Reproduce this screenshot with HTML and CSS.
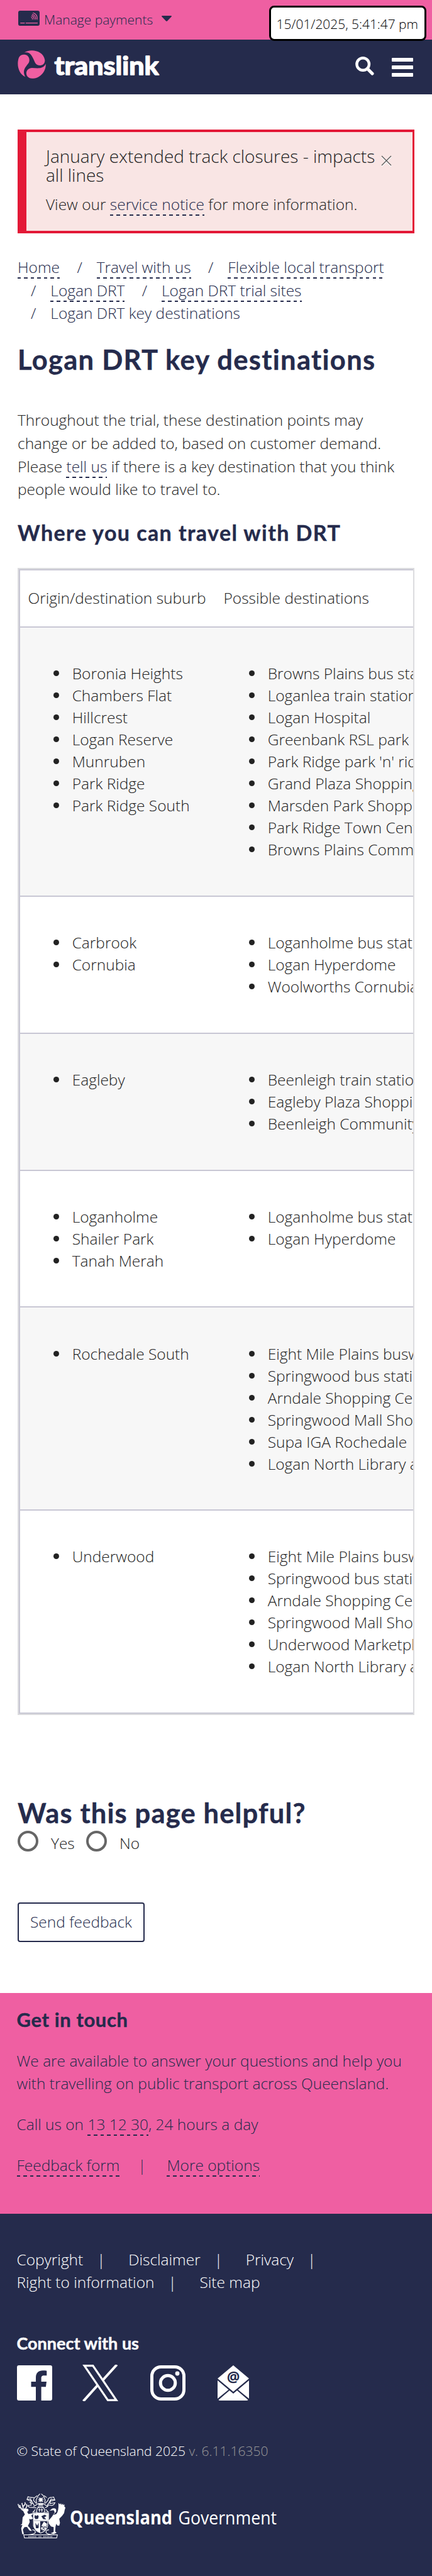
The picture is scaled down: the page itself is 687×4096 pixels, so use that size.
FILE: index.html
```html
<!DOCTYPE html>
<html lang="en">
<head>
<meta charset="utf-8">
<title>Logan DRT key destinations | Translink</title>
<link rel="stylesheet" href="styles.css">
</head>
<body>
<div class="payments">
  <svg class="card" viewBox="0 0 173 122"><rect width="173" height="122" rx="15" fill="#252b4c"/><g fill="none" stroke="#ef5fa2" stroke-width="6" stroke-linecap="round"><path d="M19 99.500h32M63 99.500h92"/><path d="M106 51q9 4 9 18M110 40q19 7 18 29M114 29q29 10 27 40M121 18q36 12 32 51"/></g></svg>
  <span class="payments-label">Manage payments</span>
  <svg class="caret" viewBox="0 0 82 46"><path d="M6 0H76Q85 1 80 8L47 42Q41 48 35 42L2 8Q-3 1 6 0Z" fill="#252b4c"/></svg>
  <div class="stamp"><span>15/01/2025, 5:41:47 pm</span></div>
</div>
<header class="masthead">
  <svg class="logo" viewBox="144 411 231 232" fill="#ef5fa2"><path d="M197 430C244 395 355 408 367 491C368 520 350 535 323 535C298 534 287 517 279 495C262 456 244 419 197 430Z"/><path d="M206 629C148 600 134 526 154 470C163 453 179 446 197 446C224 447 240 467 240 491C240 513 228 523 216 538C190 570 190 598 206 629Z"/><path d="M374 522C378 585 327 642 262 642C230 641 215 621 215 597C216 573 235 556 261 555C299 556 352 570 374 522Z"/></svg>
  <svg class="wordmark" viewBox="0 0 170 48"><text x="1.500" y="38.500" textLength="166" lengthAdjust="spacingAndGlyphs">translink</text></svg>
  <div class="tools">
    <svg class="search" viewBox="0 0 30 30" fill="none" stroke="#fff"><circle cx="12.200" cy="12" r="9.800" stroke-width="4.400"/><path d="M20 20l7 7" stroke-width="5.200" stroke-linecap="round"/></svg>
    <div class="burger"><i></i><i></i><i></i></div>
  </div>
</header>
<main class="content">
  <section class="alert">
    <div class="alert-head"><h4>January extended track closures - impacts all lines</h4><svg class="close" viewBox="0 0 17 18" fill="none"><path d="M1 2.500L16 17.500M16 2.500L1 17.500" stroke="#fff" stroke-width="1.500"/><path d="M1 1L16 16M16 1L1 16" stroke="#555" stroke-width="1.300"/></svg></div>
    <p>View our <a>service notice</a> for more information.</p>
  </section>
  <ul class="crumbs">
    <li><a>Home</a></li>
    <li><a>Travel with us</a></li>
    <li><a>Flexible local transport</a></li><br>
    <li><a>Logan DRT</a></li>
    <li><a>Logan DRT trial sites</a></li><br>
    <li>Logan DRT key destinations</li>
  </ul>
  <h1>Logan DRT key destinations</h1>
  <p class="intro">Throughout the trial, these destination points may<br>change or be added to, based on customer demand.<br>Please <a>tell us</a> if there is a key destination that you think<br>people would like to travel to.</p>
  <h2>Where you can travel with DRT</h2>
  <div class="table">
    <div class="grid">
      <div class="row head"><div>Origin/destination suburb</div><div>Possible destinations</div></div>
      <div class="row shade">
        <ul><li>Boronia Heights</li><li>Chambers Flat</li><li>Hillcrest</li><li>Logan Reserve</li><li>Munruben</li><li>Park Ridge</li><li>Park Ridge South</li></ul>
        <ul><li>Browns Plains bus station</li><li>Loganlea train station</li><li>Logan Hospital</li><li>Greenbank RSL park 'n' ride</li><li>Park Ridge park 'n' ride</li><li>Grand Plaza Shopping Centre</li><li>Marsden Park Shopping Centre</li><li>Park Ridge Town Centre</li><li>Browns Plains Community Centre</li></ul>
      </div>
      <div class="row">
        <ul><li>Carbrook</li><li>Cornubia</li></ul>
        <ul><li>Loganholme bus station</li><li>Logan Hyperdome</li><li>Woolworths Cornubia</li></ul>
      </div>
      <div class="row shade">
        <ul><li>Eagleby</li></ul>
        <ul><li>Beenleigh train station</li><li>Eagleby Plaza Shopping Centre</li><li>Beenleigh Community Centre</li></ul>
      </div>
      <div class="row">
        <ul><li>Loganholme</li><li>Shailer Park</li><li>Tanah Merah</li></ul>
        <ul><li>Loganholme bus station</li><li>Logan Hyperdome</li></ul>
      </div>
      <div class="row shade">
        <ul><li>Rochedale South</li></ul>
        <ul><li>Eight Mile Plains busway station</li><li>Springwood bus station</li><li>Arndale Shopping Centre</li><li>Springwood Mall Shopping Centre</li><li>Supa IGA Rochedale</li><li>Logan North Library and pool</li></ul>
      </div>
      <div class="row">
        <ul><li>Underwood</li></ul>
        <ul><li>Eight Mile Plains busway station</li><li>Springwood bus station</li><li>Arndale Shopping Centre</li><li>Springwood Mall Shopping Centre</li><li>Underwood Marketplace</li><li>Logan North Library and pool</li></ul>
      </div>
    </div>
  </div>
  <h3 class="helpful">Was this page helpful?</h3>
  <div class="radios"><label><i></i><span>Yes</span></label><label><i></i><span>No</span></label></div>
  <button class="send">Send feedback</button>
</main>
<section class="touch">
  <h3>Get in touch</h3>
  <p>We are available to answer your questions and help you<br>with travelling on public transport across Queensland.</p>
  <p>Call us on <a>13 12 30</a>, 24 hours a day</p>
  <p class="links"><a>Feedback form</a><span class="bar">|</span><a>More options</a></p>
</section>
<footer class="footer">
  <div class="legal"><span>Copyright</span><i>|</i><span>Disclaimer</span><i>|</i><span>Privacy</span><i>|</i></div>
  <div class="legal"><span>Right to information</span><i>|</i><span>Site map</span></div>
  <h4>Connect with us</h4>
  <div class="social">
    <svg class="fb" viewBox="0 0 56 56"><path fill="#fff" d="M3 0H53Q56 0 56 3V53Q56 56 53 56H38.600V34.300H45.900L47 26H38.600V20.500C38.600 18 39.500 16.300 43 16.300H47.300V8.700C46 8.500 43.500 8.300 41 8.300C34.500 8.300 30 12 30 19.400V26H22.500V34.300H30V56H3Q0 56 0 53V3Q0 0 3 0Z"/></svg>
    <svg class="xx" viewBox="0 0 57 58" fill="none" stroke="#fff" stroke-width="3.200"><path d="M3.200 1.600H16.800L54 56.400H40.500Z"/><path d="M54.800 0L32.500 24.500M24 33L1.500 58" stroke-width="4"/></svg>
    <svg class="ig" viewBox="0 0 56 56"><rect x="2.500" y="2.500" width="51" height="51" rx="14.500" fill="none" stroke="#fff" stroke-width="5"/><circle cx="28" cy="28" r="11.800" fill="none" stroke="#fff" stroke-width="5"/><circle cx="43" cy="13" r="3.400" fill="#fff"/></svg>
    <svg class="em" viewBox="0 0 50 56"><g fill="#fff"><path d="M25 0L50 21L25 42L0 21Z"/><path d="M0 24L17.500 38.700L0 53Z"/><path d="M50 24L32.500 38.700L50 53Z"/><path d="M19 40L25 45L31 40L48.500 55Q48 56 46 56H4Q2 56 1.500 55Z"/></g><text x="25" y="27" text-anchor="middle" class="at">@</text></svg>
  </div>
  <p class="copy">© State of Queensland 2025 <span>v. 6.11.16350</span></p>
  <div class="gov">
    <svg class="crest" viewBox="95 155 256 366" preserveAspectRatio="none" fill="none" stroke="#fff">
      <g class="line" stroke-width="1.100">
        <path d="M215 157L205 172L194 208L198 236M222 157L233 172L243 208L239 236M186 188L200 172M251 188L237 172M206 262L197 290L198 314H236L241 290L230 262ZM180 262L206 236H231L258 262M206 250H231M203 270H234M212 278V305M206 288H218M225 278V305M219 288H231"/>
        <path d="M150 180Q149 192 145 203Q161 218 169 210Q175 230 184 251M150 180Q161 188 170 186L184 188L180 210L195 236M145 203L165 198L168 250Q155 250 149 253Q157 272 169 268L196 272M158 226L176 238"/>
        <path d="M288 182Q290 195 295 208Q279 218 270 210Q264 230 254 251M288 182Q277 188 269 186L260 195L258 210L243 236M295 208L274 200L268 236L295 230Q288 254 275 252L259 248Q254 270 241 270M190 285L177 308H200M246 285L260 308H238"/>
        <path d="M208 188L231 222M231 188L208 222M205 205H234M219 188V226M213 195h12v20h-12Z"/>
        <path d="M175 318H261V378H180V420Q188 462 218 478Q250 462 256 418V378"/>
        <path d="M174 452Q190 450 190 475Q184 488 150 493M263 452Q247 450 247 475Q253 488 286 493"/>
        <path d="M128 493H308L304 519H132Z"/>
      </g>
      <g fill="#fff" stroke="none">
        <path d="M109 281L122 283L132 276L151 280Q156 290 151 299L146 305L153 322L173 316L177 324L168 335L178 360L166 366L157 362L160 388L150 420L158 432L170 456L168 462L158 456L145 428L132 430L123 450L129 487H120L114 440L121 412L110 414L119 402L122 350L134 326L125 298Z"/>
        <path d="M314 231L322 244L327 234L331 248L338 238L340 250L347 242L345 260L351 270L347 290L344 315L333 338L318 361L322 395L318 418L308 416L302 402L298 425L296 466L304 476L288 488L272 480L288 470L288 430L274 424L262 400L260 378L280 342L294 308L288 290L266 296L280 278Q294 270 301 283L302 302L286 330L302 322Q316 300 314 231Z"/>
        <path fill-rule="evenodd" d="M178 320H259V376H178ZM188 330L196 338L203 330L208 342L204 362L190 364L185 348ZM222 340L240 328L251 338L238 350L249 366L232 364Z"/>
        <path fill-rule="evenodd" d="M182 382H216V474Q188 458 182 420ZM190 394L200 418L208 392L207 438H193Z"/>
        <path d="M222 420L236 384L252 402L250 430Q244 420 234 422ZM234 424A14 16 0 1 1 233.900 424Z"/>
        <path d="M206 236H232V246H206Z"/>
      </g>
      <path class="line" stroke="#252b4c" stroke-width="1.200" d="M228 430L241 448M241 430L228 448M194 424H208"/>
      <path class="line" stroke-width="1.500" d="M122 280L104 268L97 240M112 272L106 248M126 278L121 250L118 232M124 262L136 240L134 226M138 277L144 262L143 240"/>
      <path class="line" stroke-width="2.200" stroke-dasharray="1.500 1" d="M153 507H197M208 507H221M233 507H284" opacity=".7"/>
    </svg>
    <svg class="govname" viewBox="0 0 332 34"><text x="0" y="25" textLength="163" lengthAdjust="spacingAndGlyphs" font-weight="700">Queensland</text><text x="172.500" y="25" textLength="156.500" lengthAdjust="spacingAndGlyphs">Government</text></svg>
  </div>
</footer>
</body>
</html>
```
FILE: styles.css
```css
* { box-sizing: border-box; }
body { margin: 0; width: 687px; height: 4096px; overflow: hidden; background: #fff; color: #222; font: 300 24.47px/36.7px "Open Sans", "Noto Sans", sans-serif; }
h1, h2, h3, h4, p, ul { margin: 0; padding: 0; }
svg { display: block; flex: none; }
i { font-style: normal; }
a { color: #252b4c; padding-bottom: 2px; background: repeating-linear-gradient(90deg, #252b4c 0 5.2px, transparent 5.2px 10.49px) left bottom / 100% 2px no-repeat; }
h1, h2, h3, .footer h4 { font-family: Lato, sans-serif; font-weight: 700; color: #252b4c; white-space: nowrap; -webkit-text-stroke: .4px; font-variant-ligatures: none; }

.payments { position: relative; height: 63px; background: #ef5fa2; display: flex; align-items: flex-start; padding-left: 29px; }
.card { width: 34px; height: 24px; margin-top: 17px; }
.payments-label { margin: 12.5px 0 0 7px; width: 187px; color: #252b4c; font-size: 21px; white-space: nowrap; }
.caret { width: 16px; height: 9px; margin-top: 24.500px; }
.stamp { position: absolute; left: 428px; top: 9px; width: 250px; height: 56px; border: 3.5px solid #000; border-radius: 8px; background: #fff; color: #000; font-size: 20.9px; line-height: 52px; padding-left: 8.5px; white-space: nowrap; }

.masthead { height: 87px; background: #252b4c; display: flex; align-items: flex-start; padding: 17px 30px 0 28px; }
.logo { width: 45px; height: 45px; }
.wordmark { width: 170px; height: 48px; margin-left: 12px; }
.wordmark text { font: 700 40px Lato, sans-serif; fill: #fff; stroke: #fff; stroke-width: 1.6px; stroke-linejoin: round; }
.tools { margin-left: auto; display: flex; gap: 28px; padding-top: 10px; }
.search { width: 30px; height: 30px; }
.burger { width: 34px; padding-top: 2px; display: flex; flex-direction: column; gap: 6px; }
.burger i { height: 6px; background: #fff; border-radius: 1px; }

.content { padding: 56px 28px 0; height: 3019px; }
.alert { height: 165px; border: 4px solid #e31937; border-width: 4px 3px 4px 14px; background: #f9e5e4; padding: 24px 33px 0 31px; }
.alert-head { display: flex; }
.alert-head h4 { font-weight: 300; font-size: 28px; line-height: 29.6px; width: 533px; }
.close { width: 17px; height: 18px; margin-top: 13px; }
.alert p { margin-top: 13.8px; }
.crumbs { list-style: none; margin-top: 36px; color: #252b4c; white-space: nowrap; }
.crumbs li { display: inline; }
.crumbs li + li::before, .crumbs br + li::before { content: "/"; padding: 0 23px 0 21px; }
h1 { margin-top: 29px; font-size: 43.500px; line-height: 50px; letter-spacing: 1.3px; }
.intro { margin-top: 54px; white-space: nowrap; }
h2 { margin-top: 30px; font-size: 34px; line-height: 40px; letter-spacing: 1.42px; }

.table { margin-top: 36px; border: 2px solid #dcdcdf; overflow: hidden; }
.grid { width: 900px; border: solid #c8c7d4; border-width: 2px 0 0 2px; }
.row { display: grid; grid-template-columns: 311px 1fr; border-bottom: 2px solid #c8c7d4; line-height: 35px; white-space: nowrap; }
.row > ul { list-style: none; padding: 55.2px 0 55.700px 53px; }
.row li { height: 35px; display: flex; align-items: center; gap: 20.7px; }
.row li::before { content: ""; width: 9px; height: 9px; border-radius: 50%; background: #222; }
.shade { background: #f7f7f7; }
.head { height: 91px; padding-top: 26px; }
.head > div { padding-left: 12.5px; }

.helpful { margin-top: 130px; font-size: 43.500px; line-height: 50px; letter-spacing: 1.15px; }
.radios { display: flex; margin-top: 4px; height: 34px; }
.radios label { width: 109px; display: flex; }
.radios i { width: 33px; height: 33px; border: 4px solid #666; border-radius: 50%; }
.radios span { margin: 2px 0 0 20px; }
.send { display: block; margin-top: 80px; width: 202px; height: 63px; border: 2px solid #252b4c; border-radius: 4px; background: #fff; color: #252b4c; font: inherit; padding: 0; white-space: nowrap; }

.touch { background: #ef5fa2; color: #252b4c; height: 351px; padding: 24px 26.5px 0; white-space: nowrap; }
.touch h3 { font-size: 31px; line-height: 36px; letter-spacing: .6px; }
.touch p { margin-top: 28px; }
.touch h3 + p { margin-top: 29.5px; }
.bar { display: inline-block; width: 75px; padding-right: 4px; text-align: center; }

.footer { background: #252b4c; color: #fff; height: 576px; padding: 54.5px 26.500px 0; }
.legal { display: flex; white-space: nowrap; }
.legal i { width: 72px; padding-left: 22px; }
.footer h4 { color: #fff; margin-top: 60px; font-size: 27px; line-height: 36px; }
.social { display: flex; margin-top: 16.5px; height: 58px; }
.fb { width: 56px; height: 56px; margin-top: 1px; }
.xx { width: 57px; height: 58px; margin-left: 48px; }
.ig { width: 56px; height: 56px; margin: 1px 0 0 51px; }
.em { width: 50px; height: 56px; margin: 1px 0 0 51.500px; }
.at { font: 700 23px "Open Sans", sans-serif; fill: #252b4c; }
.copy { margin-top: 61px; font-size: 21px; white-space: nowrap; }
.copy span { color: #999; }
.gov { display: flex; margin: 49px 0 0 1.5px; }
.crest { width: 76px; height: 71px; }
.crest .line, .crest .line path { vector-effect: non-scaling-stroke; }
.govname { width: 332px; height: 34px; margin: 24px 0 0 6.500px; }
.govname text { font-family: "Open Sans", sans-serif; font-size: 30px; font-weight: 400; fill: #fff; }
.govname text:first-child { font-weight: 700; }
```
